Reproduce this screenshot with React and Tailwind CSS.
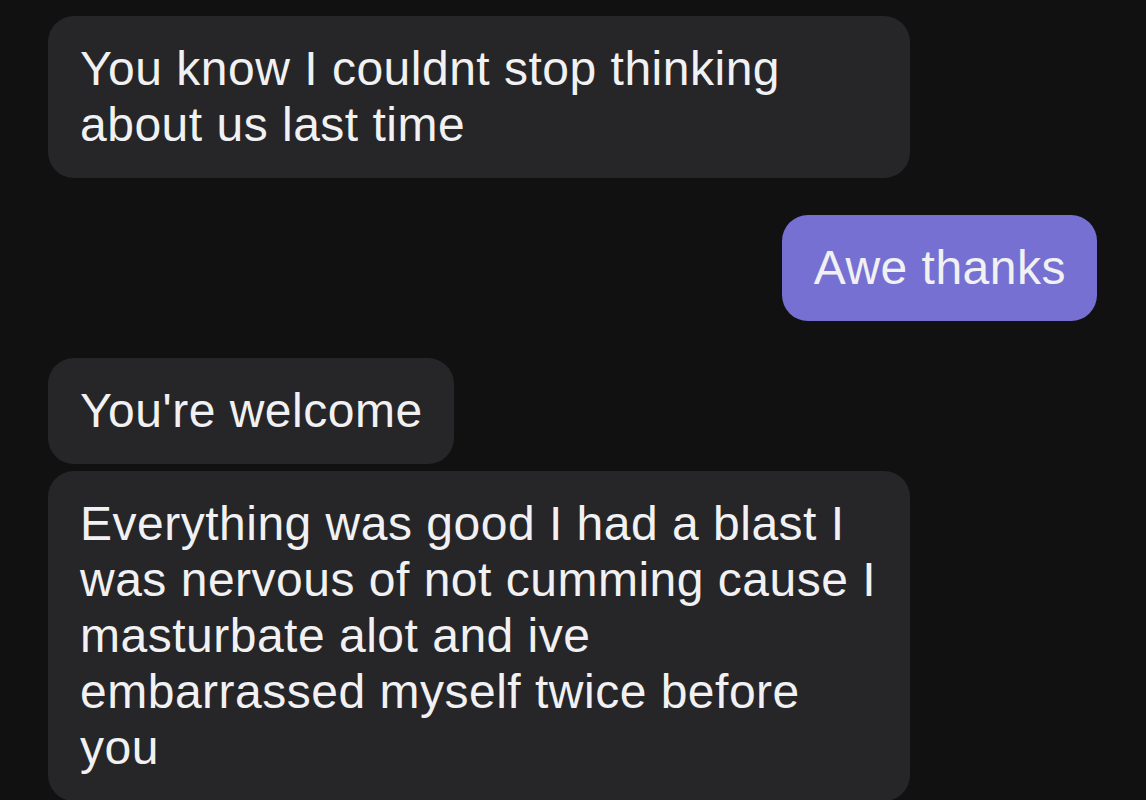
const messages = [
  { id: 1, mine: false, lines: ['You know I couldnt stop thinking', 'about us last time'], gap: 'mt-0', width: 'w-[862px]' },
  { id: 2, mine: true, lines: ['Awe thanks'], gap: 'mt-[37px]', width: '' },
  { id: 3, mine: false, lines: ["You're welcome"], gap: 'mt-[37px]', width: '' },
  {
    id: 4,
    mine: false,
    lines: [
      'Everything was good I had a blast I',
      'was nervous of not cumming cause I',
      'masturbate alot and ive',
      'embarrassed myself twice before',
      'you',
    ],
    gap: 'mt-[7px]',
    width: 'w-[862px]',
  },
];

function Bubble({ msg }) {
  return (
    <div className={`flex shrink-0 ${msg.mine ? 'justify-end' : 'justify-start'} ${msg.gap}`}>
      <div
        className={`${msg.width} whitespace-nowrap rounded-[26px] pl-[32px] pr-[31px] py-[25px] text-[48px] leading-[56px] tracking-[0.5px] text-[#f1f1f3] ${
          msg.mine ? 'bg-[#7670d3]' : 'bg-[#262628]'
        }`}
      >
        {msg.lines.map((line, i) => (
          <div key={i}>{line}</div>
        ))}
      </div>
    </div>
  );
}

export default function App() {
  return (
    <div
      className="w-[1146px] h-[800px] overflow-hidden bg-[#111111] pt-[16px] pl-[48px] pr-[49px]"
      style={{ fontFamily: '"Liberation Sans", Arial, sans-serif' }}
    >
      <div className="flex flex-col">
        {messages.map(m => (
          <Bubble key={m.id} msg={m} />
        ))}
      </div>
    </div>
  );
}
